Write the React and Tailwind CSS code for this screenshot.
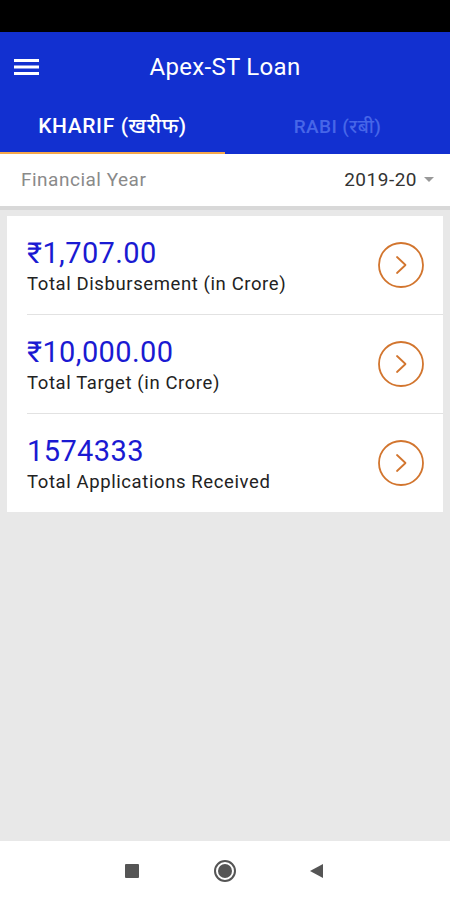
import React from "react";

function Chevron() {
  return (
    <svg width="48" height="48" viewBox="0 0 48 48" className="shrink-0">
      <circle cx="24" cy="24" r="22" fill="none" stroke="#d2752e" strokeWidth="1.8" />
      <path d="M20 16 L28.5 24 L20 32" fill="none" stroke="#d2752e" strokeWidth="1.8" strokeLinecap="round" strokeLinejoin="round" />
    </svg>
  );
}

function Row({ value, label }) {
  return (
    <div className="flex items-center pl-[20px] pr-[18px] h-[98px]">
      <div className="flex-1 flex flex-col">
        <div className="text-[29px] leading-[34px] text-[#1a1ad2] tracking-[0.4px]">{value}</div>
        <div className="text-[18.5px] leading-[22px] text-[#222] mt-[3px] tracking-[0.6px]">{label}</div>
      </div>
      <Chevron />
    </div>
  );
}

export default function App() {
  return (
    <div className="w-[450px] h-[900px] flex flex-col bg-[#e8e8e8] overflow-hidden" style={{ fontFamily: "Roboto, 'Noto Sans', sans-serif" }}>
      <div className="h-[32px] bg-black shrink-0" />
      <div className="bg-[#1230d0] shrink-0">
        <div className="h-[70px] flex items-center relative">
          <svg width="26" height="20" viewBox="0 0 26 20" className="ml-[14px]">
            <rect x="0" y="2" width="25" height="3" fill="white" />
            <rect x="0" y="8.5" width="25" height="3" fill="white" />
            <rect x="0" y="15" width="25" height="3" fill="white" />
          </svg>
          <div className="absolute left-0 right-0 text-center text-white text-[24px] tracking-[0.3px] pointer-events-none">Apex-ST Loan</div>
        </div>
        <div className="flex h-[52px]">
          <div className="w-1/2 flex flex-col">
            <div className="flex-1 flex items-center justify-center text-white text-[21px] font-medium tracking-[0.6px]">KHARIF (खरीफ)</div>
            <div className="h-[2px] bg-[#f5a84a]" />
          </div>
          <div className="w-1/2 flex flex-col">
            <div className="flex-1 flex items-center justify-center text-[#4766e8] text-[19px] font-medium tracking-[0.4px]">RABI (रबी)</div>
            <div className="h-[2px]" />
          </div>
        </div>
      </div>
      <div className="bg-white h-[56px] flex items-center justify-between pl-[21px] pr-[16px] shrink-0 border-b-[4px] border-[#d8d8d8]">
        <span className="text-[19px] text-[#8a8a8a] tracking-[0.5px]">Financial Year</span>
        <span className="flex items-center gap-[7px] text-[19px] text-[#333] tracking-[0.5px]">
          2019-20
          <svg width="10" height="6" viewBox="0 0 10 6"><path d="M0 0 L10 0 L5 5 Z" fill="#999" /></svg>
        </span>
      </div>
      <div className="mx-[7px] mt-[6px] bg-white">
        <Row value="₹1,707.00" label="Total Disbursement (in Crore)" />
        <div className="ml-[20px] h-px bg-[#e2e2e2]" />
        <Row value="₹10,000.00" label="Total Target (in Crore)" />
        <div className="ml-[20px] h-px bg-[#e2e2e2]" />
        <Row value="1574333" label="Total Applications Received" />
      </div>
      <div className="flex-1" />
      <div className="h-[59px] bg-white shrink-0 relative">
        <div className="absolute left-[125px] top-[23px] w-[14px] h-[14px] bg-[#555] rounded-[1px]" />
        <div className="absolute left-[214px] top-[19px] w-[22px] h-[22px] rounded-full border-[2px] border-[#555] flex items-center justify-center">
          <div className="w-[14px] h-[14px] rounded-full bg-[#555]" />
        </div>
        <svg className="absolute left-[309px] top-[22px]" width="15" height="16" viewBox="0 0 15 16"><path d="M14 1 L1 8 L14 15 Z" fill="#555" /></svg>
      </div>
    </div>
  );
}
